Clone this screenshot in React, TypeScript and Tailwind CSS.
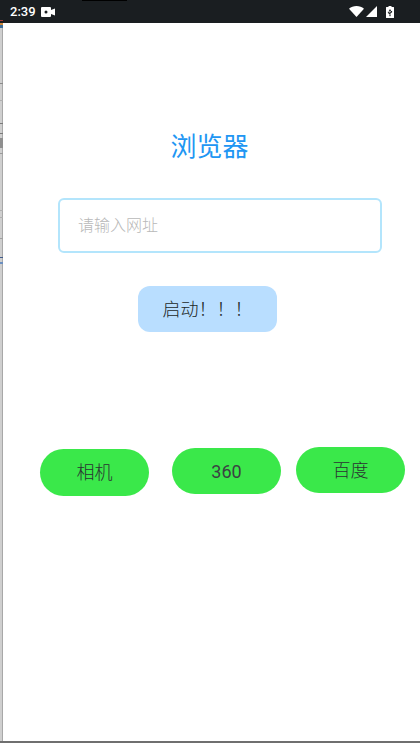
const cjk = "font-['Roboto','Noto_Sans_CJK_SC',sans-serif]";

// stray marks of the window behind, y is measured from the top of the strip
const ticks = [
  { y: 60, h: 1, color: '#8a8a8a' },
  { y: 77, h: 1, color: '#b0b0b0' },
  { y: 100, h: 1, color: '#7a7a7a' },
  { y: 110, h: 1, color: '#7a7a7a' },
  { y: 115, h: 10, color: '#8f8f8f' },
  { y: 130, h: 1, color: '#9a9a9a' },
  { y: 187, h: 1, color: '#b0b0b0' },
  { y: 194, h: 1, color: '#b0b0b0' },
  { y: 215, h: 1, color: '#a0a0a0' },
  { y: 234, h: 1, color: '#3f5a8a' },
  { y: 239, h: 2, color: '#6b8fc0' },
];

const StatusBar = () => (
  <div className="relative flex h-[23px] shrink-0 items-center justify-between bg-[#1a1e21] pl-[10px] pr-[26px] text-white">
    <div className="absolute left-[82px] top-0 h-px w-[45px] bg-black" />
    <div className="absolute bottom-[2px] left-0 h-px w-[3px] bg-[#a83a3a]" />
    <div className="flex items-center gap-[5px]">
      <span className="font-['Roboto',sans-serif] text-[13px] font-medium leading-none">2:39</span>
      <svg width="14" height="10" viewBox="0 0 14 10">
        <path fill="#fff" fillRule="evenodd" d="M1 0h8a1 1 0 0 1 1 1v2L14 1.500v7L10 7v2a1 1 0 0 1-1 1H1a1 1 0 0 1-1-1V1a1 1 0 0 1 1-1zm4 3.500a1.500 1.500 0 1 0 0 3 1.500 1.500 0 0 0 0-3z" />
      </svg>
    </div>
    <div className="flex items-center gap-[2px]">
      <svg width="15" height="11" viewBox="0 0 15 11">
        <path fill="#fff" d="M0 2.800C2 1 4.600 0 7.500 0S13 1 15 2.800L7.500 11z" />
      </svg>
      <svg width="11" height="11" viewBox="0 0 11 11">
        <path fill="#fff" d="M11 0v11H0z" />
      </svg>
      <svg className="ml-[7px]" width="8" height="12" viewBox="0 0 8 12">
        <path fill="#fff" fillRule="evenodd" d="M2.500 0h3v1H7.500a.5.5 0 0 1 .5.500V11.500a.5.5 0 0 1-.5.500H.5a.5.5 0 0 1-.5-.5V1.500A.5.5 0 0 1 .5 1h2zM4 3 2.800 5h.8v2L2.500 6v-.6h-.6V7L3.600 8.200v.8a.700.700 0 1 0 .8 0V7.500L6.100 6.300V5h.3-1.400v1l-.6.400V5h.8z" />
      </svg>
    </div>
  </div>
);

const PillButton = ({ label, className }: { label: string; className: string }) => (
  <button className={`flex h-[46px] w-[109px] items-center justify-center rounded-full bg-[#3ae84a] text-[18px] ${className}`}>
    {label}
  </button>
);

export default function App() {
  return (
    <div className={`flex h-[743px] w-[420px] flex-col overflow-hidden border-b-2 border-b-[#6f6f6f] bg-white ${cjk}`}>
      <StatusBar />
      <div className="flex flex-1">
        <div className="relative w-[3px] shrink-0 border-r border-r-[#a8a8a8] bg-[#cfcfcf]">
          <div className="absolute left-0 top-0 h-[2px] w-[3px] bg-[#d08a3c]" />
          <div className="absolute left-0 top-[2px] h-[3px] w-[3px] bg-[#3f6f9a]" />
          {ticks.map((t) => (
            <div
              key={t.y}
              className="absolute left-0 w-[3px]"
              style={{ top: t.y, height: t.h, backgroundColor: t.color }}
            />
          ))}
        </div>
        <div className="flex-1">
          <div className="mt-[108px] flex flex-col items-start">
            <h1 className="w-full pr-[4px] text-center text-[26px] font-normal leading-[32px] text-[#2196f3]">浏览器</h1>
            <input
              placeholder="请输入网址"
              className="ml-[55px] mt-[35px] h-[55px] w-[324px] rounded-[6px] border-2 border-[#b3e5fc] bg-white pl-[18px] pr-[19px] text-[16px] font-light outline-none placeholder:text-[#b8b8b8]"
            />
            <button className="ml-[135px] mt-[33px] flex h-[46px] w-[139px] items-center justify-center rounded-[12px] bg-[#b9deff] text-[18px] font-light text-[#222828]">
              启动！！！
            </button>
            <div className="ml-[37px] mt-[115px] flex items-start">
              <PillButton label="相机" className="mt-[2px] h-[47px] font-light text-[#2b3232]" />
              <PillButton label="360" className="ml-[23px] mt-px font-normal text-[#3a4242]" />
              <PillButton label="百度" className="ml-[15px] font-light text-[#2b3232]" />
            </div>
          </div>
        </div>
      </div>
    </div>
  );
}
